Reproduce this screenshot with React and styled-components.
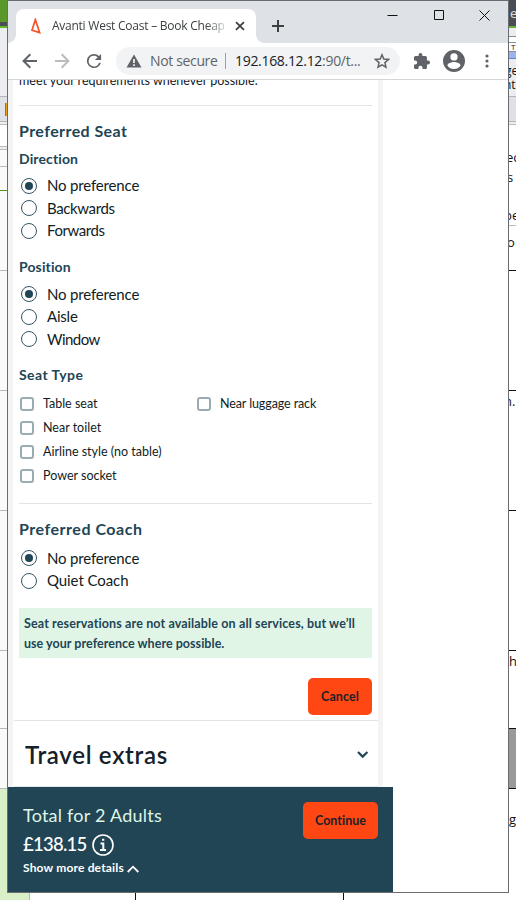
import React from "react";
import styled, { createGlobalStyle } from "styled-components";

const Global = createGlobalStyle`
  * { box-sizing: border-box; font-variant-ligatures: none !important; }
  body { margin: 0; background: #fff; overflow: hidden; }
`;

const brand = '"Lato", "Open Sans", sans-serif';
const system = '"Open Sans", "Noto Sans", sans-serif';

/* ---------- Desktop behind the browser window ---------- */
const Desktop = styled.div`
  display: grid;
  grid-template-columns: 7px 502px 7px;
  grid-template-rows: 893px 7px;
  width: 516px;
  height: 900px;
  overflow: hidden;
`;
const Strip = styled.div`
  display: flex;
  flex-direction: column;
  overflow: hidden;
`;
const Band = styled.div`
  flex: none;
  display: flex;
  align-items: center;
  height: ${(p) => p.$h}px;
  background: ${(p) => p.$bg || "#fff"};
  border-bottom: ${(p) => (p.$line ? `1px solid ${p.$line}` : "0")};
  color: ${(p) => p.$color || "#111"};
  font: ${(p) => p.$size || 13}px/1 ${system};
  overflow: hidden;
  white-space: nowrap;
`;
const Peek = styled.span`
  margin-left: ${(p) => p.$shift || 0}px;
`;
const Marker = styled.i`
  width: 2px;
  height: 13px;
  margin-left: 5px;
  background: #e6a012;
  border-left: 1px solid #a9711a;
`;
const Sheet = styled.div`
  grid-column: 1 / -1;
  display: grid;
  grid-template-columns: 30px 106px 208px 1fr;
`;
const Cell = styled.div`
  background: ${(p) => (p.$green ? "#d8efc8" : "#fff")};
  border-right: ${(p) => (p.$edge ? `1px solid ${p.$edge}` : "0")};
`;

/* ---------- Browser ---------- */
const Window = styled.div`
  display: flex;
  flex-direction: column;
  height: 893px;
  border: 1px solid #6b6c6f;
  background: #fff;
  overflow: hidden;
`;
const TabBar = styled.div`
  flex: none;
  display: flex;
  height: 42px;
  background: #dee1e6;
`;
const Tab = styled.div`
  position: relative;
  display: flex;
  align-items: center;
  width: 240px;
  height: 34px;
  margin: 8px 0 0 8px;
  padding: 0 11px 0 13px;
  background: #fff;
  border-radius: 8px 8px 0 0;
  &::before, &::after {
    content: "";
    position: absolute;
    bottom: 0;
    width: 8px;
    height: 8px;
  }
  &::before { left: -8px; background: radial-gradient(circle at 0 0, #dee1e6 7.5px, #fff 8px); }
  &::after { right: -8px; background: radial-gradient(circle at 100% 0, #dee1e6 7.5px, #fff 8px); }
`;
const TabTitle = styled.div`
  width: 174px;
  margin: 0 10px 0 10px;
  overflow: hidden;
  white-space: nowrap;
  font: 12px/18px ${system};
  letter-spacing: -0.24px;
  color: #3c4043;
  mask-image: linear-gradient(90deg, #000 154px, transparent 178px);
`;
const NewTab = styled.div`
  display: flex;
  align-items: center;
  margin: 8px 0 0 16px;
`;
const Controls = styled.div`
  display: flex;
  gap: 35px;
  margin-left: auto;
  padding: 9px 18px 0 0;
`;
const Toolbar = styled.div`
  flex: none;
  display: flex;
  align-items: center;
  height: 37px;
  padding: 0 13px 0 14px;
  border-bottom: 1px solid #d5d6d8;
`;
const Nav = styled.div`
  display: flex;
  gap: 16px;
`;
const Address = styled.div`
  display: flex;
  align-items: center;
  width: 284px;
  height: 28px;
  margin-left: 14px;
  padding: 0 10px;
  border-radius: 14px;
  background: #f1f3f4;
  font: 14px/20px ${system};
  color: #5f6368;
  white-space: nowrap;
`;
const Security = styled.span`
  width: 75px;
  padding-left: 8px;
  letter-spacing: -0.35px;
`;
const Divider = styled.i`
  width: 1px;
  height: 16px;
  margin: 0 9px 0 8px;
  background: #9aa0a6;
`;
const Url = styled.span`
  flex: 1;
  letter-spacing: -0.31px;
  b { font-weight: 400; color: #202124; }
`;
const Actions = styled.div`
  display: flex;
  align-items: center;
  margin-left: auto;
`;
const Gap = styled.i`
  width: ${(p) => p.$w}px;
`;

/* ---------- Page ---------- */
const Page = styled.div`
  flex: none;
  width: 375px;
  height: 707px;
  border: solid #f4f4f4;
  border-width: 0 5px;
  overflow: hidden;
  background: #fff;
`;
const Body = styled.div`
  height: 640px;
  padding: 0 6px;
  overflow: hidden;
`;
const Clipped = styled.div`
  height: 25px;
  overflow: hidden;
  white-space: nowrap;
  font: 12.5px/20px ${brand};
  color: #14202a;
  p { margin: -9px 0 0; }
`;
const Rule = styled.div`
  height: 1px;
  margin-top: ${(p) => p.$top || 0}px;
  background: #e3e4e5;
`;
const Heading = styled.h2`
  margin: ${(p) => p.$top}px 0 0;
  font: 700 16px/24px ${brand};
  letter-spacing: ${(p) => p.$track || 0}px;
  color: #214555;
`;
const SubHeading = styled.h3`
  margin: ${(p) => p.$top}px 0 0;
  font: 700 14px/20px ${brand};
  letter-spacing: ${(p) => p.$track || 0}px;
  color: #214555;
`;
const RadioList = styled.div`
  display: grid;
  grid-auto-rows: 22.6px;
  margin-top: ${(p) => p.$top}px;
`;
const Choice = styled.label`
  display: flex;
  align-items: center;
  gap: 10px;
  padding-left: 2px;
  font: 15px/22px ${brand};
  letter-spacing: ${(p) => p.$track || 0}px;
  color: #111c24;
`;
const ChoiceText = styled.span`
  padding-bottom: 1px;
`;
const Radio = styled.i`
  display: grid;
  place-items: center;
  width: 16px;
  height: 16px;
  border: 1px solid #355563;
  border-radius: 50%;
  &::after {
    content: "";
    width: 8px;
    height: 8px;
    border-radius: 50%;
    background: ${(p) => (p.$on ? "#214555" : "transparent")};
  }
`;
const CheckGrid = styled.div`
  display: grid;
  grid-template-columns: 177px 1fr;
  grid-auto-rows: 24px;
  margin-top: 7px;
`;
const CheckItem = styled.label`
  display: flex;
  align-items: center;
  gap: 9px;
  padding-left: 1px;
  font: 12.5px/20px ${brand};
  letter-spacing: ${(p) => p.$track || 0}px;
  color: #111c24;
`;
const Box = styled.i`
  width: 14px;
  height: 14px;
  border: 2px solid #9aabb3;
  border-radius: 3px;
`;
const Note = styled.div`
  height: 50px;
  margin-top: 16.4px;
  padding: 6px 5px 4px;
  background: #e1f5e7;
  font: 700 12.5px/20px ${brand};
  color: #214555;
  white-space: nowrap;
`;
const Line = styled.div`
  letter-spacing: ${(p) => p.$track}px;
`;
const ButtonRow = styled.div`
  display: flex;
  justify-content: flex-end;
  margin-top: 20px;
`;
const Button = styled.button`
  width: ${(p) => p.$w}px;
  height: 37px;
  padding: 0;
  border: 0;
  border-radius: 5px;
  background: #ff4713;
  font: 700 12.5px/20px ${brand};
  letter-spacing: ${(p) => p.$track || 0}px;
  color: #1c1f26;
`;
const Extras = styled.div`
  display: flex;
  align-items: center;
  justify-content: space-between;
  height: 67px;
  margin-left: 1px;
  padding: 2px 9px 0 11px;
  border: solid #e3e4e5;
  border-width: 1px 0;
  font: 600 24px/32px ${brand};
  letter-spacing: 0.7px;
  color: #14202a;
`;
const Footer = styled.div`
  flex: none;
  display: flex;
  justify-content: space-between;
  width: 385px;
  height: 105px;
  padding: 15px 15px 0;
  background: #214555;
  color: #fff;
  font-family: ${brand};
`;
const Summary = styled.div`
  display: flex;
  flex-direction: column;
  margin-top: -1px;
`;
const Total = styled.div`
  font-size: 18px;
  line-height: 28px;
  letter-spacing: 0.23px;
  color: #dff5e6;
`;
const Price = styled.div`
  display: flex;
  align-items: center;
  gap: 5px;
  height: 30px;
  font-size: 18.5px;
  font-weight: 500;
  letter-spacing: -0.74px;
  svg { margin-top: 2px; }
`;
const Details = styled.div`
  display: flex;
  align-items: center;
  gap: 3px;
  height: 17px;
  font-size: 12px;
  font-weight: 700;
  letter-spacing: 0.17px;
  svg { margin-top: 3px; }
`;

const Icon = ({ w = 16, h = w, box, children, ...rest }) => (
  <svg width={w} height={h} viewBox={box || `0 0 ${w} ${h}`} fill="none" {...rest}>
    {children}
  </svg>
);

const BackArrow = () => (
  <Icon stroke="#5f6368" strokeWidth="2"><path d="M15 8H2M8.3 1.3 1.6 8l6.7 6.7" /></Icon>
);
const ForwardArrow = () => (
  <Icon stroke="#babcbe" strokeWidth="2"><path d="M1 8h13M7.7 1.3 14.4 8l-6.7 6.7" /></Icon>
);
const Reload = () => (
  <Icon box="3 3 18 18">
    <path fill="#5f6368" d="M17.65 6.35A7.95 7.95 0 0 0 12 4a8 8 0 1 0 7.73 10h-2.08A6 6 0 1 1 12 6c1.66 0 3.14.69 4.22 1.78L13 11h7V4z" />
  </Icon>
);

const RadioGroup = ({ top, items }) => (
  <RadioList $top={top}>
    {items.map(([label, track], i) => (
      <Choice key={label} $track={track}><Radio $on={i === 0} /><ChoiceText>{label}</ChoiceText></Choice>
    ))}
  </RadioList>
);

const leftBands = [
  { h: 22, bg: "#5a982b" }, { h: 4, bg: "#4a4d55" }, { h: 2, bg: "#62b32d" },
  { h: 69, bg: "#ecedf0", line: "#b5b6ba" }, { h: 25, bg: "#dfe1e6", line: "#b5b6ba", marker: true },
  { h: 3, bg: "#eee", line: "#bbb" }, { h: 22, bg: "#fff", line: "#bbb" }, { h: 3, bg: "#eee", line: "#bbb" },
  { h: 17, bg: "#fafafa", line: "#bbb" }, { h: 24, bg: "#fafafa", line: "#4f9622" },
  { h: 80, bg: "#fafafa", line: "#b8b8b8" }, { h: 120, bg: "#fafafa", line: "#b8b8b8" },
  { h: 120, bg: "#fafafa", line: "#b8b8b8" }, { h: 140, bg: "#fafafa", line: "#b8b8b8" },
  { h: 78, bg: "#fafafa", line: "#b8b8b8" }, { h: 60, bg: "#fafafa", line: "#b8b8b8" },
  { h: 104, bg: "#d8efc8" },
];
const rightBands = [
  { h: 26, bg: "#4a4d55", text: "e", color: "#ddd", shift: 1 }, { h: 2, bg: "#62b32d" },
  { h: 9, bg: "#ecedf0", line: "#8b8c96" }, { h: 6, bg: "#fff", line: "#8b8c96" },
  { h: 9, bg: "#fff", line: "#8b8c96", text: "T", size: 8, shift: 2 }, { h: 7, bg: "#9db5ee", line: "#637fd0" },
  { h: 5, bg: "#ecedf0" }, { h: 14, bg: "#ecedf0", text: "ge", size: 12, shift: -4 },
  { h: 14, bg: "#ecedf0", text: "nte", size: 12, shift: -5 }, { h: 5, bg: "#ecedf0", line: "#b5b6ba" },
  { h: 25, bg: "#dfe1e6", line: "#b5b6ba" }, { h: 3, bg: "#eee", line: "#bbb" },
  { h: 22 }, { h: 20, text: "ec", shift: -3 }, { h: 20, text: "s", shift: -2 }, { h: 19 },
  { h: 20, text: "be", shift: -5, line: "#bbb" }, { h: 5 }, { h: 22, text: "o", shift: -2 },
  { h: 18, line: "#111" }, { h: 120, line: "#111" }, { h: 20, text: "n.", shift: -5 }, { h: 100, line: "#111" },
  { h: 140, line: "#111" }, { h: 20, text: "h", shift: 0 }, { h: 58, line: "#111" },
  { h: 60, bg: "#999", line: "#111" }, { h: 20 }, { h: 20, text: "g", shift: 0 }, { h: 64 },
];

const Bands = ({ bands }) => (
  <Strip>
    {bands.map((b, i) => (
      <Band key={i} $h={b.h} $bg={b.bg} $line={b.line} $color={b.color} $size={b.size}>
        {b.marker && <Marker />}
        {b.text && <Peek $shift={b.shift}>{b.text}</Peek>}
      </Band>
    ))}
  </Strip>
);

export default function App() {
  return (
    <>
      <Global />
      <Desktop>
        <Bands bands={leftBands} />
        <Window>
          <TabBar>
            <Tab>
              <Icon w={13} h={16} stroke="#f6532b" strokeWidth="1.7"><path d="M6.400 1.600 3 12.200l7.700 2.500z" /></Icon>
              <TabTitle>Avanti West Coast – Book Cheap</TabTitle>
              <Icon w={10} stroke="#3c4043" strokeWidth="1.8"><path d="m1 1 8 8M9 1 1 9" /></Icon>
            </Tab>
            <NewTab><Icon w={12} stroke="#3c4043" strokeWidth="2"><path d="M6 0v12M0 6h12" /></Icon></NewTab>
            <Controls>
              <Icon w={11} stroke="#111"><path d="M.5 5.5h10" /></Icon>
              <Icon w={11} stroke="#111"><path d="M1.500.5h9v9h-9z" /></Icon>
              <Icon w={11} stroke="#111"><path d="m.5.5 10 10m0-10-10 10" /></Icon>
            </Controls>
          </TabBar>
          <Toolbar>
            <Nav><BackArrow /><ForwardArrow /><Reload /></Nav>
            <Address>
              <Icon w={16} h={14}>
                <path fill="#5f6368" d="M8 .5 15.500 13.500H.5z" /><path stroke="#fff" strokeWidth="1.6" d="M8 5v4M8 10.300v1.600" />
              </Icon>
              <Security>Not secure</Security>
              <Divider />
              <Url><b>192.168.12.12</b>:90/t...</Url>
              <Icon w={16} stroke="#5f6368" strokeWidth="1.5">
                <path d="m8 1.800 1.800 4.300 4.700.4-3.600 3.100 1.100 4.600L8 11.800l-4 2.400 1.100-4.600-3.600-3.100 4.700-.4z" />
              </Icon>
            </Address>
            <Actions>
              <Icon w={16} box="2 1 21 21">
                <path fill="#5f6368" d="M20.5 11H19V7a2 2 0 0 0-2-2h-4V3.5a2.5 2.5 0 0 0-5 0V5H4a2 2 0 0 0-2 2v3.8h1.5a2.7 2.7 0 0 1 0 5.4H2V20a2 2 0 0 0 2 2h3.8v-1.5a2.7 2.7 0 0 1 5.4 0V22H17a2 2 0 0 0 2-2v-4h1.5a2.5 2.5 0 0 0 0-5z" />
              </Icon>
              <Gap $w={13} />
              <Icon w={22} box="2 2 20 20">
                <path fill="#5f6368" d="M12 2a10 10 0 1 0 0 20 10 10 0 0 0 0-20zm0 3a3.3 3.3 0 1 1 0 6.6A3.3 3.3 0 0 1 12 5zm0 14.2a7.2 7.2 0 0 1-6-3.2c0-2 4-3.1 6-3.1s6 1.1 6 3.1a7.2 7.2 0 0 1-6 3.2z" />
              </Icon>
              <Gap $w={20} />
              <Icon w={4} h={14}>
                <circle cx="2" cy="2" r="1.6" fill="#5f6368" /><circle cx="2" cy="7" r="1.6" fill="#5f6368" /><circle cx="2" cy="12" r="1.6" fill="#5f6368" />
              </Icon>
              <Gap $w={6} />
            </Actions>
          </Toolbar>
          <Page>
            <Body>
              <Clipped><p>meet your requirements whenever possible.</p></Clipped>
              <Rule />
              <Heading $top={13} $track={0.42}>Preferred Seat</Heading>
              <SubHeading $top={6} $track={0.12}>Direction</SubHeading>
              <RadioGroup top={5.4} items={[["No preference", -0.16], ["Backwards", -0.38], ["Forwards", -0.42]]} />
              <SubHeading $top={14.8} $track={0.12}>Position</SubHeading>
              <RadioGroup top={5.9} items={[["No preference", -0.16], ["Aisle", -0.2], ["Window", -0.55]]} />
              <SubHeading $top={13.9} $track={0.45}>Seat Type</SubHeading>
              <CheckGrid>
                <CheckItem><Box />Table seat</CheckItem>
                <CheckItem $track={-0.1}><Box />Near luggage rack</CheckItem>
                <CheckItem><Box />Near toilet</CheckItem><span />
                <CheckItem><Box />Airline style (no table)</CheckItem><span />
                <CheckItem><Box />Power socket</CheckItem>
              </CheckGrid>
              <Rule $top={15.2} />
              <Heading $top={13} $track={0.52}>Preferred Coach</Heading>
              <RadioGroup top={6.2} items={[["No preference", -0.16], ["Quiet Coach", -0.08]]} />
              <Note>
                <Line $track={0.13}>Seat reservations are not available on all services, but we’ll</Line>
                <Line $track={0.04}>use your preference where possible.</Line>
              </Note>
              <ButtonRow><Button $w={64} $track={0.1}>Cancel</Button></ButtonRow>
            </Body>
            <Extras>
              Travel extras
              <Icon w={13} h={9} stroke="#214555" strokeWidth="2.2"><path d="m2 2 4.700 4.600L11.400 2" /></Icon>
            </Extras>
          </Page>
          <Footer>
            <Summary>
              <Total>Total for 2 Adults</Total>
              <Price>
                £138.15
                <Icon w={22} stroke="#fff" strokeWidth="1.6">
                  <circle cx="11" cy="11" r="10" /><path strokeWidth="2" d="M8.500 9.500H11.300V16M8 16h6M10 5.800h2.300" />
                </Icon>
              </Price>
              <Details>
                Show more details
                <Icon w={12} h={8} stroke="#fff" strokeWidth="1.800"><path d="m.7 7L6 1.700 11.300 7" /></Icon>
              </Details>
            </Summary>
            <Button $w={75}>Continue</Button>
          </Footer>
        </Window>
        <Bands bands={rightBands} />
        <Sheet>
          <Cell $green $edge="#b8b8b8" />
          <Cell $edge="#111" />
          <Cell $edge="#111" />
          <Cell />
        </Sheet>
      </Desktop>
    </>
  );
}
